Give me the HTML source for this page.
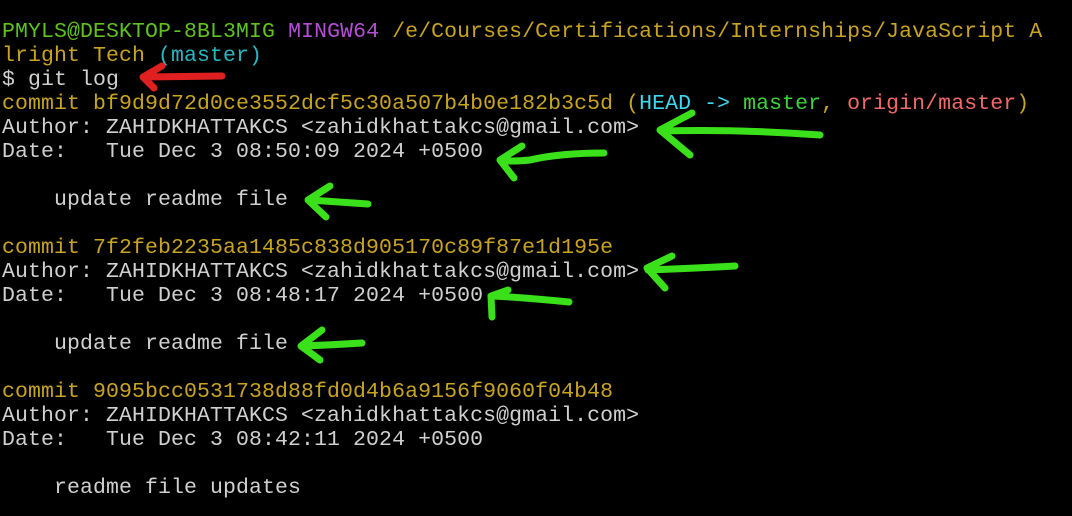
<!DOCTYPE html>
<html><head><meta charset="utf-8"><style>
html,body{margin:0;padding:0;background:#000;width:1072px;height:516px;overflow:hidden}
pre{position:absolute;left:2px;top:20px;margin:0;font-family:"Liberation Mono",monospace;font-size:21.5px;letter-spacing:0.1px;line-height:24px;color:#d0d0d0;white-space:pre}
.g{color:#5fc21e}.m{color:#b64ed8}.y{color:#c8a421}.c{color:#29b8c2}.h{color:#3cd9ef}.gr{color:#3fd23f}.r{color:#f06a6a}
svg{position:absolute;left:0;top:0}
</style></head><body>
<pre><span class="g">PMYLS@DESKTOP-8BL3MIG</span> <span class="m">MINGW64</span> <span class="y">/e/Courses/Certifications/Internships/JavaScript A
lright Tech</span> <span class="c">(master)</span>
$ git log
<span class="y">commit bf9d9d72d0ce3552dcf5c30a507b4b0e182b3c5d (</span><span class="h">HEAD -&gt; </span><span class="gr">master</span><span class="y">, </span><span class="r">origin/master</span><span class="y">)</span>
Author: ZAHIDKHATTAKCS &lt;zahidkhattakcs@gmail.com&gt;
Date:   Tue Dec 3 08:50:09 2024 +0500

    update readme file

<span class="y">commit 7f2feb2235aa1485c838d905170c89f87e1d195e</span>
Author: ZAHIDKHATTAKCS &lt;zahidkhattakcs@gmail.com&gt;
Date:   Tue Dec 3 08:48:17 2024 +0500

    update readme file

<span class="y">commit 9095bcc0531738d88fd0d4b6a9156f9060f04b48</span>
Author: ZAHIDKHATTAKCS &lt;zahidkhattakcs@gmail.com&gt;
Date:   Tue Dec 3 08:42:11 2024 +0500

    readme file updates</pre>
<svg width="1072" height="516" fill="none" stroke-linecap="round" stroke-linejoin="round">
<path d="M222 76 L145 77 M162 66 L143 77 L154 88" stroke="#e02020" stroke-width="7"/>
<g stroke="#3ae01a" stroke-width="7">
<path d="M820 135 Q740 129 662 131 M692 113 L660 130 L690 155"/>
<path d="M604 153 Q560 153 530 160 Q510 162 500 160 M522 146 L500 160 L514 178"/>
<path d="M368 204 Q340 202 310 200 M330 186 L308 200 L326 217"/>
<path d="M735 266 Q700 268 648 270 M672 256 L647 268 L665 288"/>
<path d="M569 302 Q530 298 494 296 M508 290 L491 296 L492 317"/>
<path d="M362 343 Q330 345 302 346 M322 330 L301 346 L320 360"/>
</g>
</svg>
</body></html>
